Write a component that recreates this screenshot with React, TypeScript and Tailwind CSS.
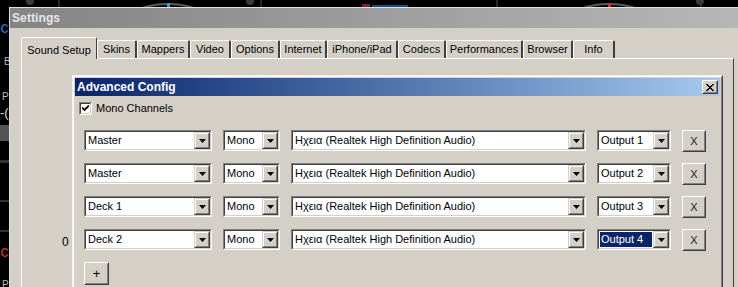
import React from "react";

const F = { fontFamily: '"Liberation Sans", Arial, sans-serif' };

function DropBtn() {
  return (
    <div className="w-[16px] h-full flex border border-t-[#d4d0c8] border-l-[#d4d0c8] border-r-[#404040] border-b-[#404040] bg-[#d4d0c8]">
      <div className="flex-1 flex items-center justify-center border border-t-white border-l-white border-r-[#808080] border-b-[#808080]">
        <svg width="7" height="4" viewBox="0 0 7 4">
          <path d="M0 0h7L3.5 4z" fill="#000" />
        </svg>
      </div>
    </div>
  );
}

function Combo({ cls, text, sel }: { cls: string; text: string; sel?: boolean }) {
  return (
    <div className={`${cls} h-[21px] flex border border-t-[#808080] border-l-[#808080] border-r-white border-b-white`}>
      <div className="flex-1 flex border border-t-[#404040] border-l-[#404040] border-r-[#d4d0c8] border-b-[#d4d0c8] bg-white">
        <div className="flex-1 flex p-[1px] min-w-0">
          <div
            className={
              sel
                ? "flex-1 flex items-center bg-[#0a246a] text-white pl-[1px]"
                : "flex-1 flex items-center text-black pl-[1px]"
            }
          >
            <span className="whitespace-nowrap">{text}</span>
          </div>
        </div>
        <DropBtn />
      </div>
    </div>
  );
}

function Raised({ cls, children }: { cls: string; children: React.ReactNode }) {
  return (
    <div className={`${cls} flex border border-t-white border-l-white border-r-[#404040] border-b-[#404040] bg-[#d4d0c8]`}>
      <div className="flex-1 flex items-center justify-center border border-t-[#d4d0c8] border-l-[#d4d0c8] border-r-[#808080] border-b-[#808080]">
        {children}
      </div>
    </div>
  );
}

function Row({ src, out, sel }: { src: string; out: string; sel?: boolean }) {
  return (
    <div className="flex items-start gap-[11px] h-[21px]">
      <Combo cls="w-[128px]" text={src} />
      <Combo cls="w-[57px]" text="Mono" />
      <Combo cls="w-[295px]" text="Hχεια (Realtek High Definition Audio)" />
      <Combo cls="w-[74px]" text={out} sel={sel} />
      <Raised cls="w-[24px] h-[22px]">
        <span className="text-[11px] text-[#222]">X</span>
      </Raised>
    </div>
  );
}

const tabs: { label: string; cls: string }[] = [
  { label: "Skins", cls: "w-[40px]" },
  { label: "Mappers", cls: "w-[53px]" },
  { label: "Video", cls: "w-[41px]" },
  { label: "Options", cls: "w-[49px]" },
  { label: "Internet", cls: "w-[47px]" },
  { label: "iPhone/iPad", cls: "w-[71px]" },
  { label: "Codecs", cls: "w-[48px]" },
  { label: "Performances", cls: "w-[77px]" },
  { label: "Browser", cls: "w-[50px]" },
  { label: "Info", cls: "w-[42px]" },
];

export default function App() {
  return (
    <div className="relative w-[738px] h-[287px] overflow-hidden bg-black text-[11px]" style={F}>
      {/* desktop background decoration */}
      <svg className="absolute left-0 top-0" width="738" height="8" viewBox="0 0 738 8">
        <rect x="58" y="0" width="2" height="8" fill="#2a2a2a" />
        <rect x="260" y="0" width="2" height="8" fill="#2a2a2a" />
        <rect x="496" y="0" width="2" height="8" fill="#2a2a2a" />
        <rect x="700" y="0" width="2" height="8" fill="#2a2a2a" />
        <ellipse cx="168" cy="50" rx="62" ry="46" fill="none" stroke="#5a5a5a" strokeWidth="2" />
        <ellipse cx="168" cy="50" rx="55" ry="42" fill="none" stroke="#333" strokeWidth="2" />
        <rect x="167" y="3" width="3" height="4" fill="#2aa0e0" />
        <ellipse cx="609" cy="50" rx="62" ry="46" fill="none" stroke="#5a5a5a" strokeWidth="2" />
        <ellipse cx="609" cy="50" rx="55" ry="42" fill="none" stroke="#333" strokeWidth="2" />
        <rect x="608" y="3" width="3" height="4" fill="#e02a2a" />
        <rect x="362" y="4" width="8" height="3" fill="#802030" />
        <rect x="372" y="5" width="36" height="2" fill="#1e4e80" />
        <circle cx="30" cy="1" r="4" fill="#3a3a3a" />
        <circle cx="250" cy="1" r="4" fill="#3a3a3a" />
        <circle cx="700" cy="1" r="4" fill="#3a3a3a" />
      </svg>
      <div className="absolute left-0 top-0 w-[9px] h-[287px] overflow-hidden">
        <div className="absolute left-[-3px] top-[20px] text-[16px] text-[#1a7fc0] leading-none">lc</div>
        <div className="absolute left-[4px] top-[57px] text-[10px] text-[#bbb] leading-none">B</div>
        <div className="absolute left-[2px] top-[92px] text-[10px] text-[#bbb] leading-none">P</div>
        <div className="absolute left-[0px] top-[106px] text-[13px] text-[#ddd] leading-none">-(</div>
        <div className="absolute left-0 top-[125px] w-[9px] h-[16px] bg-[#555]" />
        <div className="absolute left-0 top-[160px] w-[9px] h-[3px] bg-[#333]" />
        <div className="absolute left-0 top-[200px] w-[9px] h-[2px] bg-[#333]" />
        <div className="absolute left-0 top-[230px] w-[9px] h-[2px] bg-[#333]" />
        <div className="absolute left-[-3px] top-[244px] text-[16px] text-[#c04020] leading-none">lc</div>
        <div className="absolute left-[2px] top-[280px] text-[10px] text-[#bbb] leading-none">P</div>
      </div>

      {/* Settings window */}
      <div className="absolute left-[9px] top-[7px] w-[745px] h-[300px] flex flex-col border-t border-l border-[#e0e0e0] bg-[#d4d0c8]">
        <div className="h-[20px] shrink-0 flex items-center justify-between bg-gradient-to-r from-[#848484] to-[#b8b8b8] pl-[2px] pr-[4px]">
          <span className="text-[12px] font-bold text-[#e6e6e6] tracking-[0.1px]">Settings</span>
          <div className="w-[16px] h-[14px] mr-[-13px] mt-[1px] bg-[#d4d0c8] border border-t-white border-l-white border-r-[#404040] border-b-[#404040] flex items-center justify-center text-[12px] font-bold leading-none text-black">
            X
          </div>
        </div>
        <div className="flex-1 flex flex-col pl-[11px] pt-[9px]">
          {/* tabs */}
          <div className="flex items-start h-[22px] relative z-10">
            <div className="w-[76px] h-[22px] flex items-start justify-center pt-[4px] bg-[#d4d0c8] border-t border-l border-white border-r border-r-[#404040] rounded-t-[2px] text-black">
              Sound Setup
            </div>
            {tabs.map((t) => (
              <div
                key={t.label}
                className={`${t.cls} h-[18px] mt-[3px] flex items-center justify-center bg-[#d4d0c8] border-t border-l border-white border-r-2 border-r-[#404040] rounded-t-[2px] text-black whitespace-nowrap`}
              >
                {t.label}
              </div>
            ))}
          </div>
          {/* panel */}
          <div className="relative w-[713px] flex-1 mt-[-1px] border-t border-l border-white border-r border-r-[#404040]">
            <div className="absolute left-[40px] top-[174px] text-[12px] text-black">0</div>
            <div className="ml-[50px] mt-[16px] w-[651px] h-[240px] flex flex-col border border-t-[#f0f0f0] border-l-[#f0f0f0] border-r-[#404040] border-b-[#404040] bg-[#d4d0c8]">
              <div className="flex-1 flex flex-col border border-t-white border-l-white border-r-[#808080] border-b-[#808080] p-[1px]">
                <div className="h-[18px] shrink-0 flex items-center justify-between bg-gradient-to-r from-[#0a246a] to-[#a6caf0] pl-[2px] pr-[2px]">
                  <span className="text-[12px] font-bold text-white">Advanced Config</span>
                  <div className="w-[16px] h-[14px] flex border border-t-white border-l-white border-r-[#404040] border-b-[#404040] bg-[#d4d0c8]">
                    <div className="flex-1 flex items-center justify-center border border-t-[#d4d0c8] border-l-[#d4d0c8] border-r-[#808080] border-b-[#808080]">
                      <svg width="8" height="7" viewBox="0 0 8 7">
                        <path d="M0 0L7 7M1 0L8 7M7 0L0 7M8 0L1 7" stroke="#000" strokeWidth="1" />
                      </svg>
                    </div>
                  </div>
                </div>
                <div className="flex items-center gap-[4px] pl-[4px] mt-[6px] h-[13px]">
                  <div className="w-[13px] h-[13px] bg-white border border-t-[#808080] border-l-[#808080] border-r-white border-b-white flex">
                    <div className="flex-1 flex items-center justify-center border border-t-[#404040] border-l-[#404040] border-r-[#d4d0c8] border-b-[#d4d0c8]">
                      <svg width="7" height="7" viewBox="0 0 7 7">
                        <path d="M0 2.5L2.5 5L7 0.5" fill="none" stroke="#000" strokeWidth="1.8" />
                      </svg>
                    </div>
                  </div>
                  <span className="text-black">Mono Channels</span>
                </div>
                <div className="flex flex-col gap-[12px] pl-[9px] mt-[15px]">
                  <Row src="Master" out="Output 1" />
                  <Row src="Master" out="Output 2" />
                  <Row src="Deck 1" out="Output 3" />
                  <Row src="Deck 2" out="Output 4" sel />
                  <Raised cls="w-[25px] h-[23px]">
                    <span className="text-[13px] text-black leading-none">+</span>
                  </Raised>
                </div>
              </div>
            </div>
          </div>
        </div>
      </div>
    </div>
  );
}
